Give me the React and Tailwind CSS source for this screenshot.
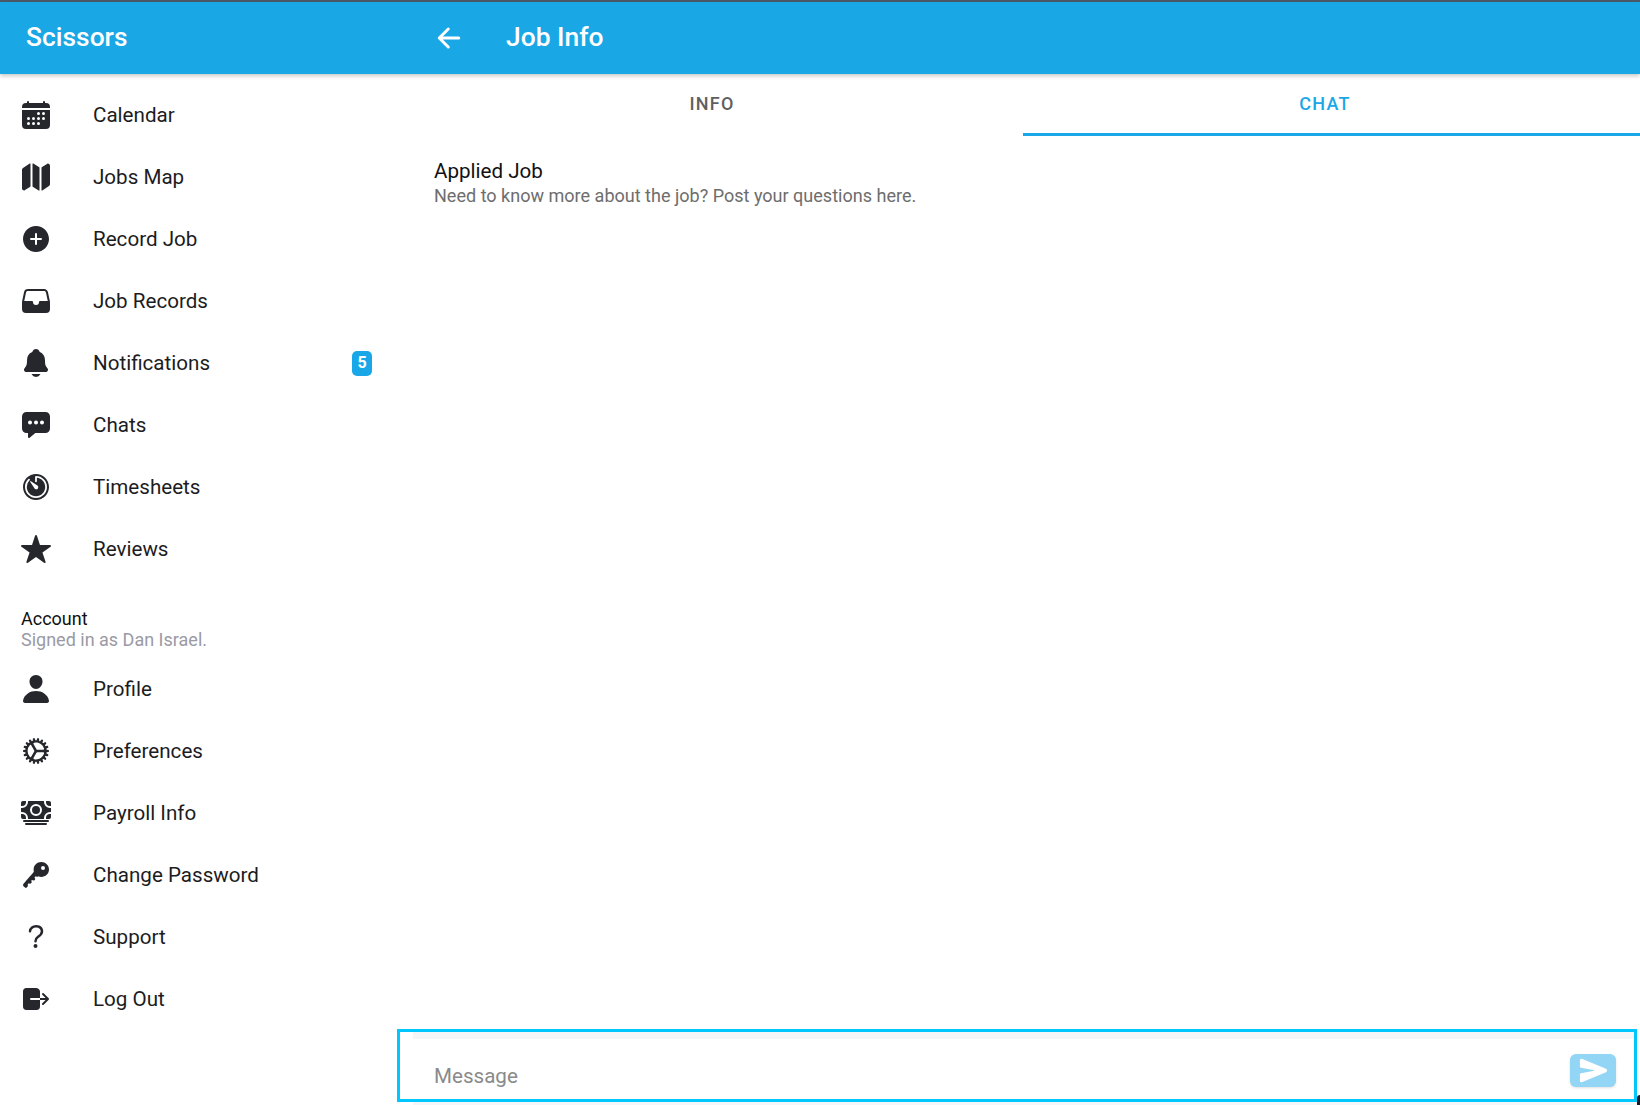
import {
  IoCalendar, IoMap, IoAddCircle, IoFileTray, IoNotifications, IoChatboxEllipses, IoTimer, IoStar,
  IoPerson, IoCog, IoCash, IoKey, IoHelp, IoLogOut, IoArrowBack, IoSend,
} from 'react-icons/io5';

const mainNav = [
  { label: 'Calendar', icon: IoCalendar },
  { label: 'Jobs Map', icon: IoMap },
  { label: 'Record Job', icon: IoAddCircle },
  { label: 'Job Records', icon: IoFileTray },
  { label: 'Notifications', icon: IoNotifications, badge: 5 },
  { label: 'Chats', icon: IoChatboxEllipses },
  { label: 'Timesheets', icon: IoTimer },
  { label: 'Reviews', icon: IoStar },
];

const accountNav = [
  { label: 'Profile', icon: IoPerson },
  { label: 'Preferences', icon: IoCog },
  { label: 'Payroll Info', icon: IoCash },
  { label: 'Change Password', icon: IoKey },
  { label: 'Support', icon: IoHelp },
  { label: 'Log Out', icon: IoLogOut },
];

function NavRow({ label, icon: Icon, badge }) {
  return (
    <div className="flex h-[62px] items-center pl-5 pr-[25px]">
      <Icon size={32} className="shrink-0 text-[#25272c]" />
      <span className="ml-[41px] flex-1 text-[20.6px] text-[#1c1c1e]">{label}</span>
      {badge && (
        <span className="flex h-[25px] w-5 items-center justify-center rounded-[5px] bg-[#1aa7e8] text-[16px] font-bold text-white">
          {badge}
        </span>
      )}
    </div>
  );
}

export default function App() {
  return (
    <div className="relative flex h-[1105px] w-[1640px] flex-col overflow-hidden bg-white font-['Roboto',sans-serif]">
      <div className="h-[2px] bg-[#4a5a66]" />
      <header className="relative z-10 flex h-[72px] shrink-0 items-center bg-[#1aa7e6] text-white shadow-[0_2px_4px_rgba(0,0,0,0.22)]">
        <div className="w-[397px] pl-[26px] text-[26.4px] font-medium">Scissors</div>
        <IoArrowBack size={32} className="ml-9" />
        <div className="ml-[41px] text-[26.4px] font-medium">Job Info</div>
      </header>
      <div className="flex min-h-0 flex-1">
        <aside className="w-[397px] shrink-0 pt-[10px]">
          {mainNav.map((item) => <NavRow key={item.label} {...item} />)}
          <div className="mt-[28px] mb-[8px] pl-[21px]">
            <div className="text-[18px] leading-[21px] text-[#111]">Account</div>
            <div className="text-[18px] leading-[21px] text-[#9a9aa5]">Signed in as Dan Israel.</div>
          </div>
          {accountNav.map((item) => <NavRow key={item.label} {...item} />)}
        </aside>
        <main className="flex min-w-0 flex-1 flex-col">
          <div className="flex h-[62px] shrink-0 text-[18px] font-medium tracking-[1.2px]">
            <div className="flex w-[626px] items-center justify-center pb-[3px] pl-1 text-[#5f5f5f]">INFO</div>
            <div className="flex flex-1 items-center justify-center border-b-[3px] border-[#1aa7e8] pr-[13px] text-[#1aa7e8]">CHAT</div>
          </div>
          <div className="flex-1 pl-[37px] pt-[22px]">
            <div className="text-[20.6px] leading-[26px] text-[#111]">Applied Job</div>
            <div className="text-[18.05px] leading-[24px] text-[#6d6d6d]">Need to know more about the job? Post your questions here.</div>
          </div>
          <div className="mr-[3px] flex h-[73px] border-[3px] border-[#00c8ff]">
            <div className="ml-[13px] flex flex-1 items-end justify-between border-t-[7px] border-[#f5f6f7] pr-[18px] pb-3 pl-[21px]">
              <span className="text-[20.6px] leading-[22px] text-[#8a8a8a]">Message</span>
              <button type="button" className="flex h-[33px] w-[46px] items-center justify-center rounded-[6px] bg-[#93d5f5] text-white shadow-sm">
                <IoSend size={29} />
              </button>
            </div>
          </div>
          <div className="ml-4 h-[3px] shrink-0 bg-[#f5f6f7]" />
        </main>
      </div>
      <div className="absolute right-0 bottom-0 h-[10px] w-[3px] rounded-tl-[3px] bg-[#1a1a2a]" />
    </div>
  );
}
